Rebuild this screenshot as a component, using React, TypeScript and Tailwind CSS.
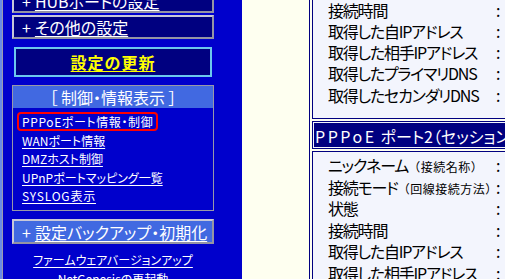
import React from 'react';

const jp = "font-['Noto_Sans_CJK_JP','Noto_Sans',sans-serif] [font-feature-settings:'palt']";

const menuLinks = [
  { text: 'PPPoEポート情報・制御', track: 'tracking-[0.6px]' },
  { text: 'WANポート情報', track: '' },
  { text: 'DMZホスト制御', track: '' },
  { text: 'UPnPポートマッピング一覧', track: '' },
  { text: 'SYSLOG表示', track: 'tracking-[0.8px]' },
];

const session1 = ['接続時間', '取得した自IPアドレス', '取得した相手IPアドレス', '取得したプライマリDNS', '取得したセカンダリDNS'];

const session2: { label: string; note?: string }[] = [
  { label: 'ニックネーム', note: '（接続名称）' },
  { label: '接続モード', note: '（回線接続方法）' },
  { label: '状態' },
  { label: '接続時間' },
  { label: '取得した自IPアドレス' },
  { label: '取得した相手IPアドレス' },
];

const Row = ({ label, note, h }: { label: string; note?: string; h: string }) => (
  <div className={`flex items-center whitespace-nowrap ${h}`}>
    <div className="w-[168px] shrink-0 overflow-hidden tracking-[-1.2px]">
      {label}
      {note && <span className="text-[12px] tracking-[0.5px] [font-feature-settings:normal]">{note}</span>}
    </div>
    <span>:</span>
  </div>
);

const SideBox = ({ title, navy, h }: { title: string; navy?: boolean; h: string }) => (
  <div
    className={`flex shrink-0 items-center whitespace-nowrap border-2 border-t-[#c8c8d8] border-l-[#c8c8d8] border-r-[#9494a4] border-b-[#9494a4] pl-[8px] text-[16px] leading-none text-white ${h} ${navy ? 'bg-[#000080]' : 'bg-[#4169e1]'}`}
  >
    <span className="mr-[4px]">+</span>
    <span className="underline underline-offset-[2px]">{title}</span>
  </div>
);

export default function App() {
  return (
    <div className={`flex h-[279px] w-[505px] overflow-hidden ${jp}`}>
      {/* left menu frame */}
      <div className="flex h-[279px] w-[242px] shrink-0 overflow-hidden bg-[#0000cc]">
        <div className="w-[2px] shrink-0 bg-[#6a8ae6]" />
        <div className="w-[1px] shrink-0 bg-[#9a9ab0]" />
        <div className="-mt-[12px] ml-[9px] flex w-[202px] shrink-0 flex-col self-start">
          <SideBox title="HUBポートの設定" navy h="h-[25px]" />
          <div className="mt-[2px] shrink-0">
            <SideBox title="その他の設定" navy h="h-[24px]" />
          </div>

          <div className="mx-[2px] mt-[8px] flex h-[30px] shrink-0 items-center justify-center border-2 border-[#6cc8ee] bg-[#000080] text-[16px] font-bold tracking-[1px] text-[#ffff00]">
            <span className="underline underline-offset-[2px]">設定の更新</span>
          </div>

          <div className="relative mt-[8px] flex h-[126px] shrink-0 flex-col border border-[#9898a8]">
            <div className="flex h-[22px] shrink-0 items-center justify-center bg-[#4169e1] text-[16px] text-white">
              ［ 制御・情報表示 ］
            </div>
            <div className="flex flex-col pl-[9px] pt-[5px] text-[12px] leading-[18.5px] text-white">
              {menuLinks.map((l) => (
                <div key={l.text}>
                  <span className={`underline underline-offset-[2px] ${l.track}`}>{l.text}</span>
                </div>
              ))}
            </div>
            <div className="absolute left-[4px] top-[26px] h-[19px] w-[141px] rounded-[4px] border-2 border-[#ff0000]" />
          </div>

          <div className="mt-[8px] shrink-0">
            <SideBox title="設定バックアップ・初期化" h="h-[25px]" />
          </div>

          <div className="mt-[7px] flex shrink-0 flex-col text-center text-[12px] leading-[18.5px] text-white">
            <div>
              <span className="underline underline-offset-[2px]">ファームウェアバージョンアップ</span>
            </div>
            <div>
              <span className="underline underline-offset-[2px]">NetGenesisの再起動</span>
            </div>
          </div>
        </div>
      </div>

      {/* right content frame */}
      <div className="h-[279px] flex-1 overflow-hidden bg-[#fefff0] text-[16px] text-black">
        <div className="-mt-[20px] ml-[67px] flex w-[300px] flex-col gap-[2px] border-l border-t border-[#000080] pl-[2px] pt-[2px]">
          <div className="border border-[#000080] bg-[#f3f5fd] pb-[13px] pl-[15px] pt-[15px]">
            {session1.map((l) => (
              <Row key={l} label={l} h="h-[21.25px]" />
            ))}
          </div>

          <div className="border border-[#000080] bg-[#f3f5fd] p-[1px]">
            <div className="flex h-[24px] items-center whitespace-nowrap bg-[#000080] pl-[1px] pt-[2px] text-white">
              <span className="tracking-[2.5px]">PPPoE</span>
              <span className="ml-[4px]">ポート2（セッション2）</span>
            </div>
          </div>

          <div className="border border-[#000080] bg-[#f3f5fd] pl-[15px] pt-[2px]">
            {session2.map((r) => (
              <Row key={r.label + (r.note ?? '')} label={r.label} note={r.note} h="h-[21.5px]" />
            ))}
          </div>
        </div>
      </div>
    </div>
  );
}
